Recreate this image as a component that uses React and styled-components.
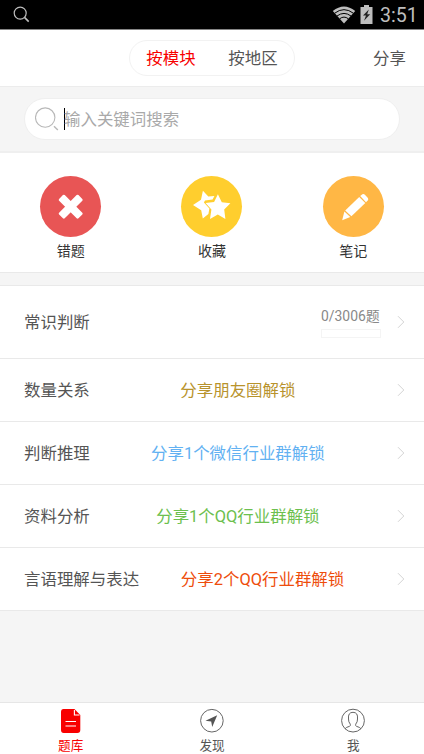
import React, { useState } from 'react';
import styled, { createGlobalStyle } from 'styled-components';

const GlobalStyle = createGlobalStyle`
    * {
        box-sizing: border-box;
    }
    body {
        margin: 0;
        background-color: #f5f5f5;
        font-family: Roboto, "Noto Sans CJK SC", sans-serif;
        color: #555;
    }
`;
const Container = styled.div`
    display: flex;
    flex-direction: column;
    height: 754px;
    width: 424px;
    overflow: hidden;
    font-size: 16.45px;
`;
const StatusBar = styled.div`
    display: flex;
    align-items: center;
    height: 30px;
    padding: 0 7px 0 13px;
    background-color: #000;
    border-bottom: 1px solid #858585;
    color: #bebebe;
`;
const StatusIcons = styled.div`
    display: flex;
    align-items: center;
    margin-left: auto;
    gap: 4px;
`;
const Time = styled.span`
    font-size: 19.6px;
    line-height: 26px;
    width: 37px;
    margin-left: 3px;
    padding-top: 2px;
`;
const Header = styled.header`
    display: grid;
    grid-template-columns: 1fr 166px 1fr;
    align-items: center;
    height: 57px;
    background-color: #fff;
    border-bottom: 1px solid #ececec;
`;
const Switch = styled.div`
    grid-column: 2;
    display: flex;
    height: 36px;
    border: 1px solid #f2f2f2;
    border-radius: 18px;
`;
const SwitchItem = styled.button`
    flex: 1;
    padding: 2px 0 0;
    border: none;
    background: none;
    font: inherit;
    line-height: 32px;
    cursor: pointer;
    color: ${({ $active }) => ($active ? '#f80000' : '#555')};
`;
const Share = styled.span`
    justify-self: end;
    padding: 2px 18px 0 0;
    line-height: 32px;
`;
const SearchArea = styled.div`
    display: flex;
    align-items: center;
    height: 66px;
    padding: 0 24px;
    border-bottom: 2px solid #efefef;
`;
const SearchBox = styled.div`
    display: flex;
    align-items: center;
    width: 376px;
    height: 42px;
    padding-left: 10px;
    background-color: #fff;
    border: 1px solid #efefef;
    border-radius: 21px;
`;
const Caret = styled.span`
    width: 1px;
    height: 22px;
    margin-left: 5px;
    background-color: #000;
`;
const Placeholder = styled.span`
    padding-top: 2px;
    margin-left: -1px;
    line-height: 24px;
    color: #a9a9a9;
`;
const Shortcuts = styled.div`
    display: flex;
    height: 120px;
    padding-top: 23px;
    background-color: #fff;
    border-bottom: 1px solid #e9e9e9;
`;
const Shortcut = styled.div`
    flex: 1;
    display: flex;
    flex-direction: column;
    align-items: center;
    font-size: 14px;
    line-height: 20px;
    color: #333;
    gap: 4px;
`;
const Circle = styled.div`
    display: flex;
    width: 61px;
    height: 61px;
    border-radius: 50%;
    background-color: ${({ $color }) => $color};
`;
const List = styled.div`
    margin-top: 12px;
    border-top: 1px solid #e9e9e9;
`;
const Row = styled.div`
    display: flex;
    align-items: center;
    height: ${({ $tall }) => ($tall ? 73 : 63)}px;
    padding: 0 18px 0 24px;
    background-color: #fff;
    border-bottom: 1px solid #e9e9e9;
    line-height: 24px;
`;
const Label = styled.span`
    padding-top: 2px;
`;
const Hint = styled.span`
    flex: 1;
    padding-top: 2px;
    text-align: center;
    white-space: nowrap;
    color: ${({ $color }) => $color};
`;
const Progress = styled.div`
    display: flex;
    flex-direction: column;
    margin-left: auto;
    margin-right: 5px;
    gap: 3px;
    font-size: 13.9px;
    line-height: 20px;
    color: #888;
`;
const Track = styled.div`
    width: 60px;
    height: 9px;
    border: 1px solid #f4f4f4;
`;
const ArrowBox = styled.div`
    display: flex;
    justify-content: center;
    width: 20px;
    padding-left: 10px;
`;
const TabBar = styled.nav`
    display: flex;
    height: 52px;
    margin-top: auto;
    background-color: #fff;
    border-top: 1px solid #e6e6e6;
`;
const Tab = styled.div`
    flex: 1;
    display: flex;
    flex-direction: column;
    align-items: center;
    padding-top: 5px;
    font-size: 12.6px;
    line-height: 18px;
    gap: 3px;
    color: ${({ $active }) => ($active ? '#f80000' : '#555')};

    svg {
        flex-shrink: 0;
    }
`;

const Arrow = () => (
    <ArrowBox>
        <svg width="8" height="14" viewBox="0 0 8 14" fill="none" stroke="#d4d4d4" strokeWidth="1">
            <path d="M1 1.2 L6.8 7 L1 12.8" />
        </svg>
    </ArrowBox>
);

const StatusSearchIcon = () => (
    <svg width="17" height="17" viewBox="0 0 17 17" fill="none" stroke="#bebebe" strokeWidth="1.2">
        <circle cx="7.2" cy="7.1" r="6" />
        <path d="M11.5 11.4 L15.7 15.6" strokeWidth="1.6" />
    </svg>
);

const WifiIcon = () => (
    <svg width="24" height="18" viewBox="0 0 24 18">
        <path d="M0.8 5 Q12 -4 23.2 5 L12 17.6 Z" fill="#bebebe" />
        <g fill="none" stroke="#000" strokeWidth="1">
            <path d="M2.5 7.3 Q12 0 21.5 7.3" />
            <path d="M5 10 Q12 4.8 19 10" />
            <path d="M7.6 12.8 Q12 9.4 16.4 12.8" />
        </g>
    </svg>
);

const BatteryIcon = () => (
    <svg width="13" height="19" viewBox="0 0 13 19">
        <path d="M4 0 H9 V2 H12.5 V19 H0.5 V2 H4 Z" fill="#bebebe" />
        <path d="M8.8 4.5 L3 10.4 H6 L4 15.7 L10.2 9.2 H7.2 Z" fill="#222" />
    </svg>
);

const SearchIcon = () => (
    <svg width="24" height="24" viewBox="0 0 24 24" fill="none" stroke="#b8b8b8" strokeWidth="1.1">
        <circle cx="10.2" cy="10.6" r="9.7" />
        <path d="M19 19.2 L22.8 23" strokeWidth="1.4" />
    </svg>
);

const CrossIcon = () => (
    <svg width="61" height="61" viewBox="0 0 61 61" fill="#fff">
        <g transform="rotate(45 30.7 30.7)">
            <rect x="17" y="26.7" width="27.4" height="8" rx="1.3" />
            <rect x="26.7" y="17" width="8" height="27.4" rx="1.3" />
        </g>
    </svg>
);

const StarsIcon = () => (
    <svg width="61" height="61" viewBox="0 0 61 61" fill="#fff">
        <path d="M21.9 14.7 L27.3 20.4 L33.4 20 L31.6 23.4 L24 24.6 L22.9 26.6 L28.4 32.6 L27.4 38 L21.8 42.6 L20.2 34.2 L12 28.9 L20 23.8 Z" />
        <path d="M36.9 18.3 L40.8 26.2 L49.4 27.3 L43.2 33.4 L44.4 42.9 L36.8 38.6 L29 42.9 L30.4 33.5 L24.6 27 L33.1 26 Z" />
    </svg>
);

const PencilIcon = () => (
    <svg width="61" height="61" viewBox="0 0 61 61" fill="#fff">
        <path d="M37.2 20.1 L39.4 18.3 Q40.6 17.6 41.9 18.7 L44.9 21.9 Q45.8 23.2 44.7 24.6 L43 26.3 Z" />
        <path d="M36.2 21 L42.3 27.1 L28.4 40.3 L22.2 34.4 Z" />
        <path d="M21.4 35.4 L27.3 41.1 L19.2 44.3 Z" />
    </svg>
);

const BankIcon = () => (
    <svg width="24" height="26" viewBox="0 0 24 26">
        <path d="M4.5 1 H15.4 L21.3 7 V22 Q21.3 25 18.3 25 H4.7 Q2 25 2 22 V4 Q2 1 4.5 1 Z" fill="#f80000" />
        <path d="M15.4 2 V7 H20.5" fill="none" stroke="#fff" strokeWidth="1.1" />
        <path d="M6.5 13.5 H17 M6.5 18 H17" stroke="#fff" strokeWidth="1.2" />
    </svg>
);

const DiscoverIcon = () => (
    <svg width="24" height="26" viewBox="0 0 24 26">
        <circle cx="11.9" cy="12.7" r="11.3" fill="none" stroke="#666" strokeWidth="1" />
        <path d="M17.2 7.2 L5.5 12.8 L11.2 13.4 L12.2 19 Z" fill="#555" />
    </svg>
);

const MeIcon = () => (
    <svg width="24" height="26" viewBox="0 0 24 26" fill="none" stroke="#666" strokeWidth="1">
        <circle cx="12" cy="12.6" r="11.4" />
        <path d="M4 20.8 Q5 19.2 8.6 18.3 Q9.7 17.8 9.3 16.2 Q7.4 14 7.5 11 Q6.8 4.3 12 4.3 Q17.2 4.3 16.5 11 Q16.6 14 14.7 16.2 Q14.3 17.8 15.4 18.3 Q19 19.2 20 20.8" />
    </svg>
);

const shortcuts = [
    { label: '错题', color: '#e85555', icon: <CrossIcon /> },
    { label: '收藏', color: '#ffce2e', icon: <StarsIcon /> },
    { label: '笔记', color: '#ffb745', icon: <PencilIcon /> },
];

const lockedRows = [
    { label: '数量关系', hint: '分享朋友圈解锁', color: '#b8932c' },
    { label: '判断推理', hint: '分享1个微信行业群解锁', color: '#62b1f2' },
    { label: '资料分析', hint: '分享1个QQ行业群解锁', color: '#6cc04e' },
    { label: '言语理解与表达', hint: '分享2个QQ行业群解锁', color: '#ee4d0c' },
];

const tabs = [
    { label: '题库', icon: <BankIcon /> },
    { label: '发现', icon: <DiscoverIcon /> },
    { label: '我', icon: <MeIcon /> },
];

const App = () => {
    const [mode, setMode] = useState('按模块')

    return (
        <Container>
            <GlobalStyle />
            <StatusBar>
                <StatusSearchIcon />
                <StatusIcons>
                    <WifiIcon />
                    <BatteryIcon />
                    <Time>3:51</Time>
                </StatusIcons>
            </StatusBar>
            <Header>
                <Switch>
                    {['按模块', '按地区'].map((m) => (
                        <SwitchItem key={m} $active={m === mode} onClick={() => setMode(m)}>{m}</SwitchItem>
                    ))}
                </Switch>
                <Share>分享</Share>
            </Header>
            <SearchArea>
                <SearchBox>
                    <SearchIcon />
                    <Caret />
                    <Placeholder>输入关键词搜索</Placeholder>
                </SearchBox>
            </SearchArea>
            <Shortcuts>
                {shortcuts.map((s) => (
                    <Shortcut key={s.label}>
                        <Circle $color={s.color}>{s.icon}</Circle>
                        {s.label}
                    </Shortcut>
                ))}
            </Shortcuts>
            <List>
                <Row $tall>
                    <Label>常识判断</Label>
                    <Progress>
                        <span>0/3006题</span>
                        <Track />
                    </Progress>
                    <Arrow />
                </Row>
                {lockedRows.map((r) => (
                    <Row key={r.label}>
                        <Label>{r.label}</Label>
                        <Hint $color={r.color}>{r.hint}</Hint>
                        <Arrow />
                    </Row>
                ))}
            </List>
            <TabBar>
                {tabs.map((t, i) => (
                    <Tab key={t.label} $active={i === 0}>
                        {t.icon}
                        <span>{t.label}</span>
                    </Tab>
                ))}
            </TabBar>
        </Container>
    )
}

export default App
